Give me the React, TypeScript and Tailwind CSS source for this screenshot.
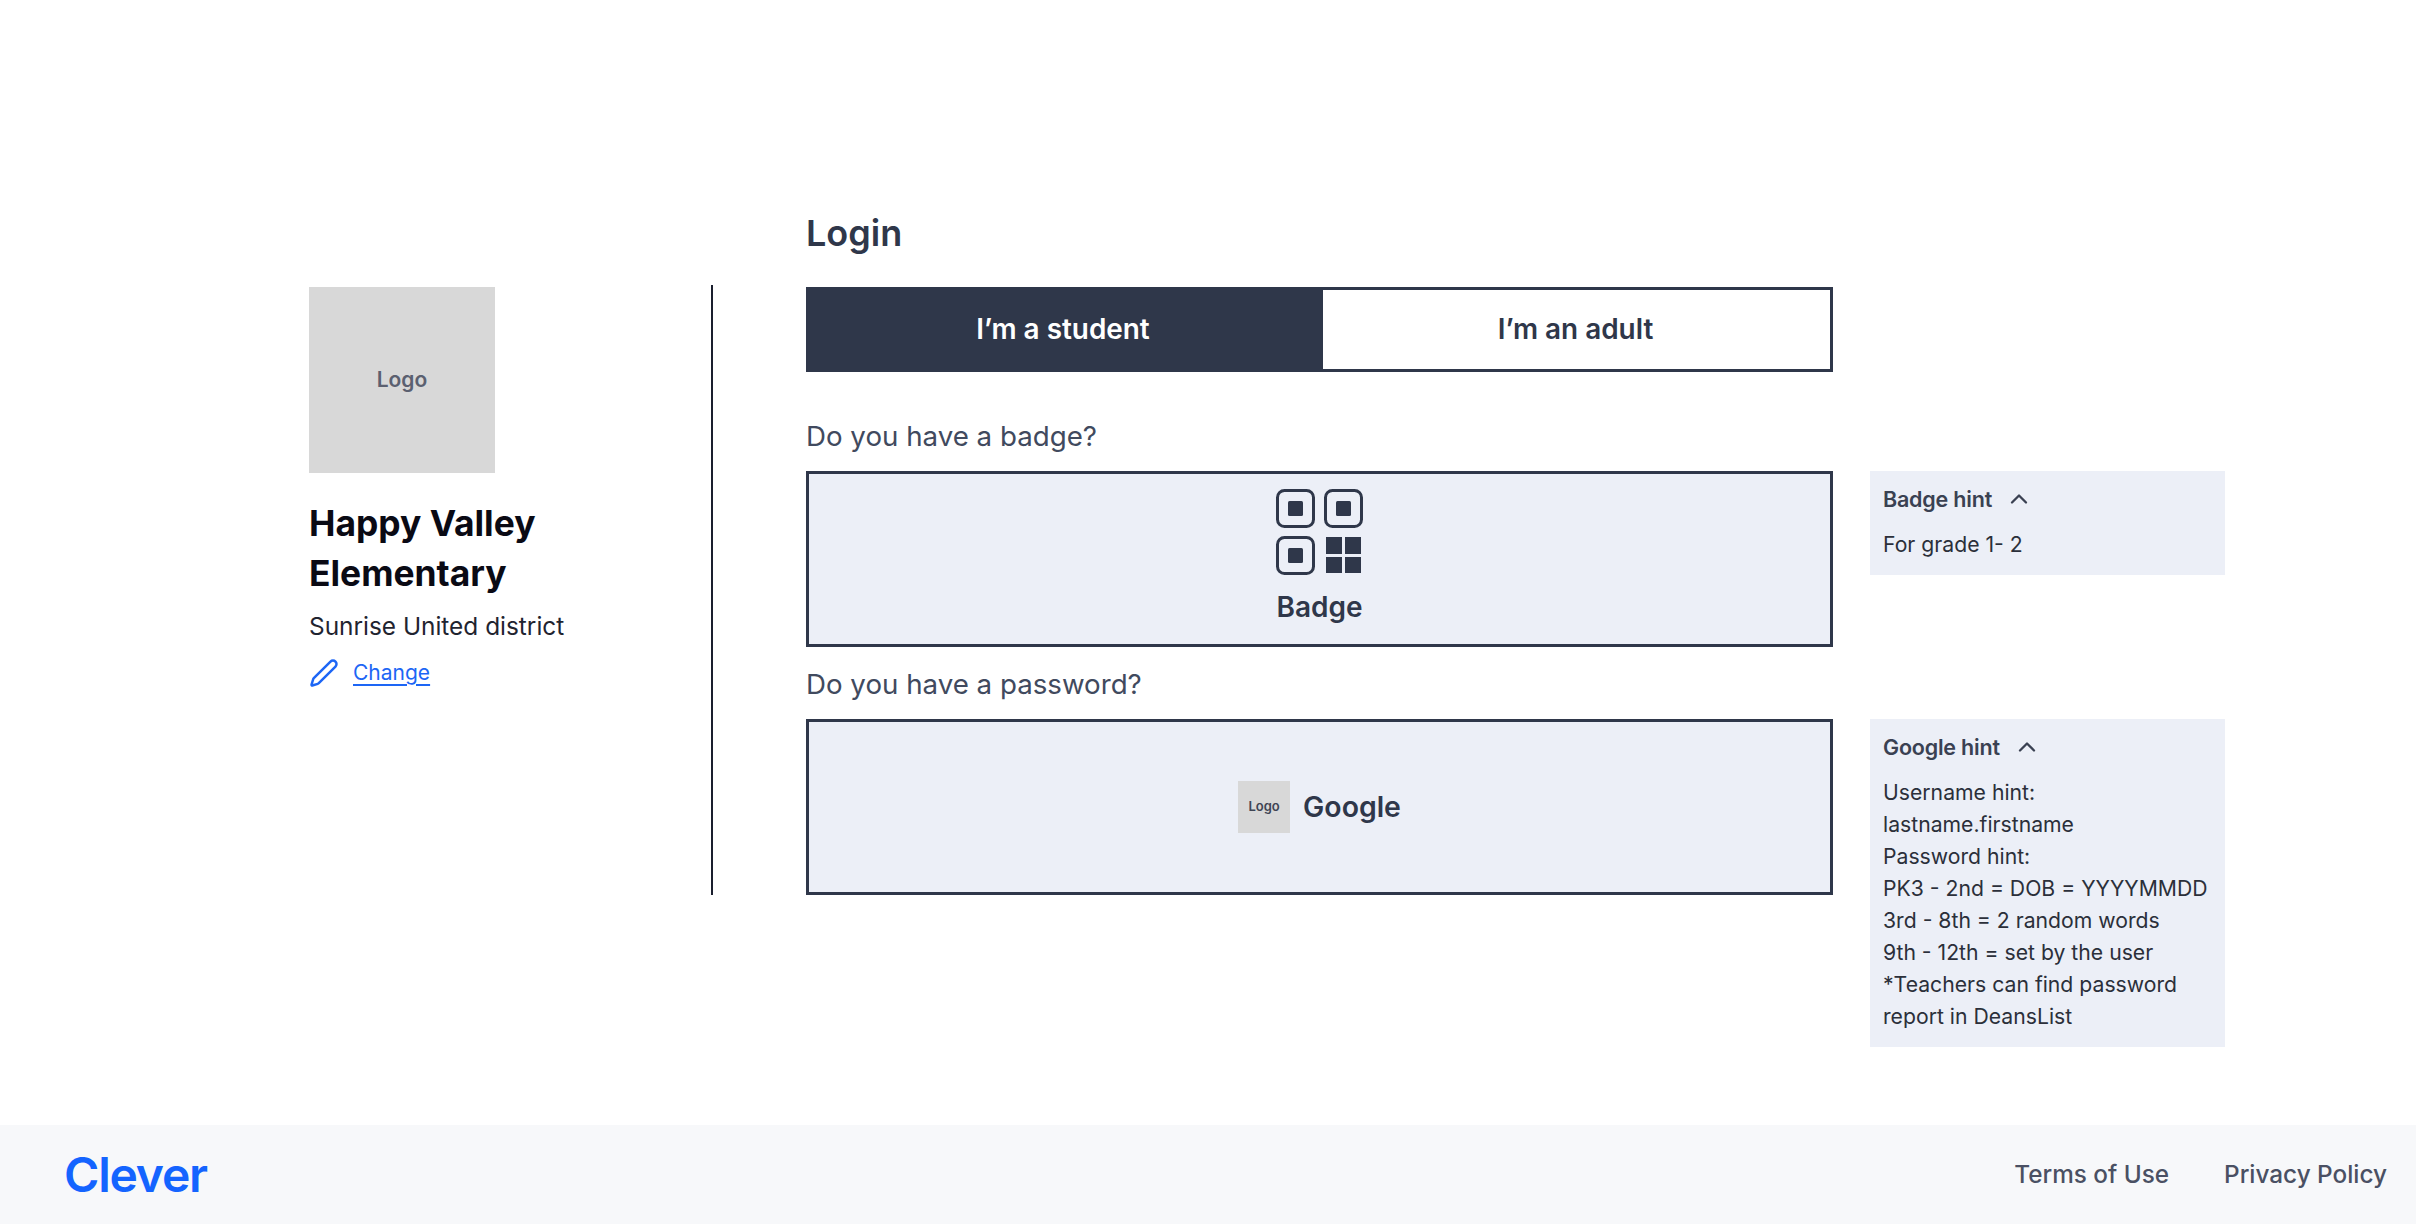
import { ChevronUp, Pen } from "lucide-react"

function BadgeIcon() {
  const cell = (x: number, y: number) => (
    <g key={`${x}-${y}`}>
      <rect x={x + 1.5} y={y + 1.5} width="36" height="36" rx="7" fill="none" stroke="#2f374a" strokeWidth="3" />
      <rect x={x + 12} y={y + 12} width="15" height="15" rx="1.5" fill="#2f374a" />
    </g>
  )
  return (
    <svg width="87" height="86" viewBox="0 0 87 86">
      {cell(0, 0)}
      {cell(48, 0)}
      {cell(0, 47)}
      <rect x="50" y="48" width="16" height="17" fill="#2f374a" />
      <rect x="69" y="48" width="16" height="17" fill="#2f374a" />
      <rect x="50" y="68" width="16" height="16" fill="#2f374a" />
      <rect x="69" y="68" width="16" height="16" fill="#2f374a" />
    </svg>
  )
}

function Hint({ title, lines }: { title: string; lines: string[] }) {
  return (
    <div className="self-start bg-[#eceff7] pl-[13px] pr-2 pt-[12px] pb-[15px]">
      <div className="flex items-center gap-[13px] h-8 text-[21.5px] font-semibold tracking-[-0.2px] text-[#3a4152]">
        {title}
        <ChevronUp size={28} strokeWidth={2} />
      </div>
      <div className="mt-[13px] text-[21.2px] leading-8 text-[#2b2f3a]">
        {lines.map(l => (
          <div key={l}>{l}</div>
        ))}
      </div>
    </div>
  )
}

export default function App() {
  return (
    <div className="min-h-[1224px] flex flex-col bg-white [font-family:Inter,sans-serif]">
      <main className="flex-1 pl-[309px] pt-[211px]">
        <div className="grid grid-cols-[402px_2px_1fr]">
          <div />
          <div />
          <h1 className="pl-[93px] h-[74px] text-[36px] leading-[44px] font-semibold text-[#2f374a]">Login</h1>

          <div className="pt-[2px]">
            <div className="w-[186px] h-[186px] bg-[#d8d8d8] flex items-center justify-center text-[21px] font-semibold text-[#5b6070]">
              Logo
            </div>
            <div className="mt-[26px] text-[35.4px] leading-[50px] font-bold text-[#0a0a14]">
              Happy Valley
              <br />
              Elementary
            </div>
            <div className="mt-[9px] text-[24.4px] leading-9 text-[#1f2430]">Sunrise United district</div>
            <div className="mt-[13px] flex items-center gap-[14px] text-[#1d66f5]">
              <Pen size={30} strokeWidth={2} />
              <a className="text-[21px] underline underline-offset-4">Change</a>
            </div>
          </div>

          <div className="bg-[#1a1f2e] h-[610px]" />

          <div className="pl-[93px] grid grid-cols-[1027px_355px] gap-x-[37px] items-start">
            <div className="flex h-[85px] mt-[2px] border-[3px] border-[#2f374a] text-[27.9px] font-semibold">
              <div className="w-[514px] pr-[6px] bg-[#2f374a] text-white flex items-center justify-center">I’m a student</div>
              <div className="flex-1 pr-[2px] text-[#2f374a] flex items-center justify-center">I’m an adult</div>
            </div>
            <div />

            <div className="mt-[47px] mb-[18px] h-[34px] text-[27.7px] leading-[34px] text-[#414a5e]">Do you have a badge?</div>
            <div />

            <div className="h-[176px] border-[3px] border-[#2f374a] bg-[#eceff7] flex flex-col items-center pt-[15px] text-[#2f374a]">
              <BadgeIcon />
              <div className="mt-[16px] text-[28px] leading-8 font-semibold">Badge</div>
            </div>
            <Hint title="Badge hint" lines={["For grade 1- 2"]} />

            <div className="mt-[20px] mb-[18px] h-[34px] text-[27.7px] leading-[34px] text-[#414a5e]">Do you have a password?</div>
            <div />

            <div className="h-[176px] border-[3px] border-[#2f374a] bg-[#eceff7] flex items-center justify-center gap-[13px]">
              <div className="w-[52px] h-[52px] bg-[#d8d8d8] flex items-center justify-center text-[13px] font-semibold text-[#3f4554]">
                Logo
              </div>
              <div className="text-[28.4px] font-semibold text-[#2f374a]">Google</div>
            </div>
            <Hint
              title="Google hint"
              lines={[
                "Username hint:",
                "lastname.firstname",
                "Password hint:",
                "PK3 - 2nd = DOB = YYYYMMDD",
                "3rd - 8th = 2 random words",
                "9th - 12th = set by the user",
                "*Teachers can find password",
                "report in DeansList",
              ]}
            />
          </div>
        </div>
      </main>

      <footer className="h-[99px] bg-[#f7f8fa] flex items-center justify-between pl-[64px] pr-[29px]">
        <div className="text-[48px] font-semibold tracking-[-1.2px] text-[#1464ff]">Clever</div>
        <div className="flex gap-[55px] text-[24.3px] font-medium text-[#4a5063]">
          <a>Terms of Use</a>
          <a>Privacy Policy</a>
        </div>
      </footer>
    </div>
  )
}
